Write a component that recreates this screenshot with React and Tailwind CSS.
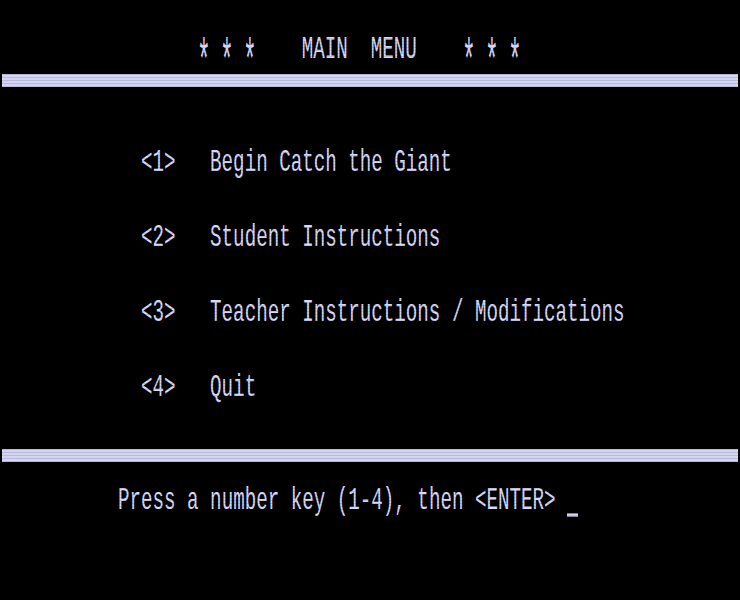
import React from 'react';

const items = [
  { key: '1', label: 'Begin Catch the Giant' },
  { key: '2', label: 'Student Instructions' },
  { key: '3', label: 'Teacher Instructions / Modifications' },
  { key: '4', label: 'Quit' },
];

// one line of screen text, stretched tall like the 40-col glyphs
const Line = ({ children, className = '' }) => (
  <div className={`h-[22px] flex items-center whitespace-pre ${className}`}>
    <span className="inline-block scale-y-[1.6] translate-y-[3px] origin-center leading-none">{children}</span>
  </div>
);

// the asterisk glyph is a tall one on this screen
const Star = () => (
  <span className="inline-block w-[11.52px] text-center leading-none scale-x-[1.15] scale-y-[1.9] translate-y-[10px]">*</span>
);

const Stars = () => (
  <>
    <Star />{' '}<Star />{' '}<Star />
  </>
);

const Bar = ({ className = '' }) => (
  <div className={`h-[13px] mx-[2px] bg-[#d4d4f4] ${className}`} />
);

export default function App() {
  return (
    <div className="relative w-[740px] h-[600px] bg-black overflow-hidden font-['Liberation_Mono',monospace] text-[19.2px] text-[#d8d8f8]">
      <Line className="mt-[37px] pl-[198px]">
        <Stars />
        {'    MAIN  MENU    '}
        <Stars />
      </Line>
      <Bar className="mt-[15px]" />

      <div className="mt-[63px] flex flex-col gap-[53px] pl-[141px]">
        {items.map((it) => (
          <Line key={it.key}>{`<${it.key}>   ${it.label}`}</Line>
        ))}
      </div>

      <Bar className="mt-[52px]" />
      <Line className="mt-[26px] pl-[118px]">
        {'Press a number key (1-4), then <ENTER> '}
        <span className="inline-block w-[11px] h-[2px] bg-[#d8d8f8] align-[-5px]" />
      </Line>

      {/* scanlines */}
      <div className="pointer-events-none absolute inset-0 bg-[repeating-linear-gradient(to_bottom,transparent_0px,transparent_2px,rgba(0,0,0,0.12)_2px,rgba(0,0,0,0.12)_3px)]" />
    </div>
  );
}
